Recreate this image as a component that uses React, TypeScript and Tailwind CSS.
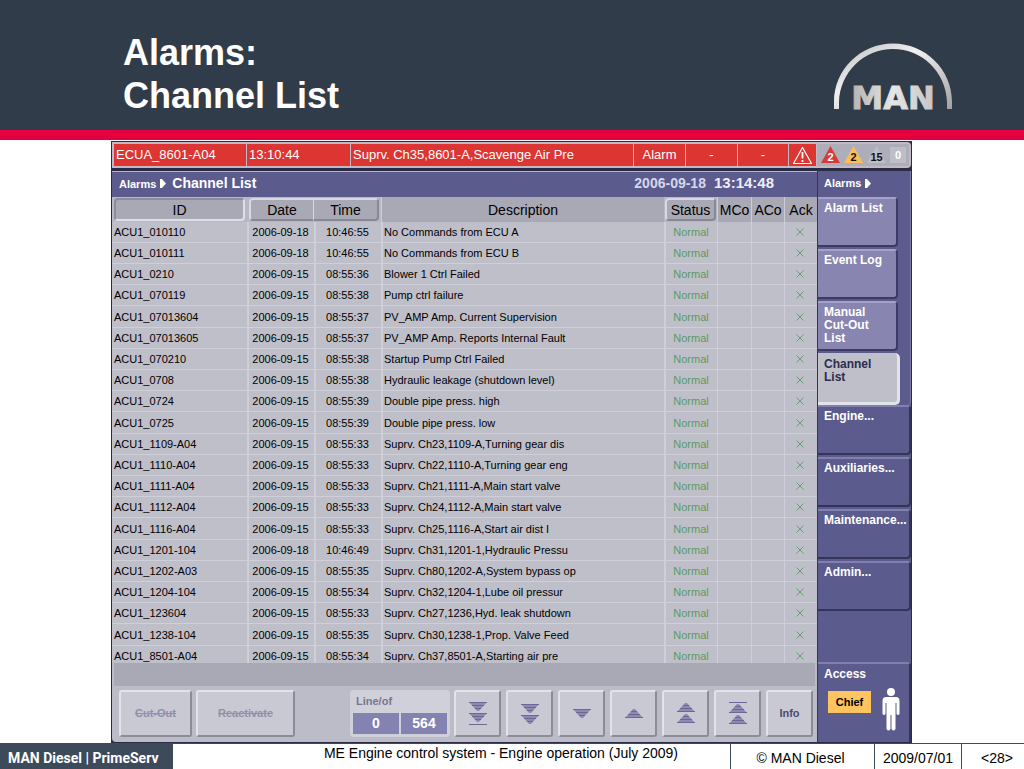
import type { ReactNode } from "react";
import { clsx } from "clsx";

type Channel = { id: string; date: string; time: string; description: string };

const channel = (id: string, day: string, time: string, description: string): Channel => ({
  id,
  date: `2006-09-${day}`,
  time,
  description,
});

const CHANNELS: Channel[] = [
  channel("ACU1_010110", "18", "10:46:55", "No Commands from ECU A"),
  channel("ACU1_010111", "18", "10:46:55", "No Commands from ECU B"),
  channel("ACU1_0210", "15", "08:55:36", "Blower 1 Ctrl Failed"),
  channel("ACU1_070119", "15", "08:55:38", "Pump ctrl failure"),
  channel("ACU1_07013604", "15", "08:55:37", "PV_AMP Amp. Current Supervision"),
  channel("ACU1_07013605", "15", "08:55:37", "PV_AMP Amp. Reports Internal Fault"),
  channel("ACU1_070210", "15", "08:55:38", "Startup Pump Ctrl Failed"),
  channel("ACU1_0708", "15", "08:55:38", "Hydraulic leakage (shutdown level)"),
  channel("ACU1_0724", "15", "08:55:39", "Double pipe press. high"),
  channel("ACU1_0725", "15", "08:55:39", "Double pipe press. low"),
  channel("ACU1_1109-A04", "15", "08:55:33", "Suprv. Ch23,1109-A,Turning gear dis"),
  channel("ACU1_1110-A04", "15", "08:55:33", "Suprv. Ch22,1110-A,Turning gear eng"),
  channel("ACU1_1111-A04", "15", "08:55:33", "Suprv. Ch21,1111-A,Main start valve"),
  channel("ACU1_1112-A04", "15", "08:55:33", "Suprv. Ch24,1112-A,Main start valve"),
  channel("ACU1_1116-A04", "15", "08:55:33", "Suprv. Ch25,1116-A,Start air dist I"),
  channel("ACU1_1201-104", "18", "10:46:49", "Suprv. Ch31,1201-1,Hydraulic Pressu"),
  channel("ACU1_1202-A03", "15", "08:55:35", "Suprv. Ch80,1202-A,System bypass op"),
  channel("ACU1_1204-104", "15", "08:55:34", "Suprv. Ch32,1204-1,Lube oil pressur"),
  channel("ACU1_123604", "15", "08:55:33", "Suprv. Ch27,1236,Hyd. leak shutdown"),
  channel("ACU1_1238-104", "15", "08:55:35", "Suprv. Ch30,1238-1,Prop. Valve Feed"),
  channel("ACU1_8501-A04", "15", "08:55:34", "Suprv. Ch37,8501-A,Starting air pre"),
];

export default function App() {
  return (
    <div className="flex min-h-screen flex-col bg-white font-['Liberation_Sans',Arial,sans-serif] text-black">
      <header className="flex h-[140px] shrink-0 items-start justify-between border-b-[10px] border-[#e4003e] bg-[#313c4a] pl-[123px] pr-[71px]">
        <h1 className="mt-[31px] text-[36px] font-bold leading-[43px] text-white">
          Alarms:
          <br />
          Channel List
        </h1>
        <ManLogo />
      </header>

      <main className="ml-[111px] mr-[112px] mt-px flex flex-1 flex-col border border-[#2a2b45] bg-[#2a2b45]">
        <AlarmBar />
        <div className="mt-[3px] flex flex-1">
          <section className="flex min-w-0 flex-1 flex-col rounded-bl border-t border-[#b4b4c4] bg-[#bcbcc8]">
            <div className="flex h-[25px] items-baseline bg-[#5b5b8d] pl-[7px] pr-[43px] leading-[22px] text-white">
              <span className="text-[11px] font-bold">Alarms</span>
              <Arrow className="ml-1" />
              <h2 className="ml-[6px] flex-1 text-sm font-bold leading-[22px]">Channel List</h2>
              <span className="text-sm font-bold leading-[22px] text-[#d6d6ee]">2006-09-18</span>
              <span className="ml-2 text-[15px] font-bold text-[#ededfa]">13:14:48</span>
            </div>
            <ChannelTable />
            <div className="mx-[2px] h-[23px] bg-[#a9a9b5]" />
            <Toolbar />
          </section>
          <Sidebar />
        </div>
      </main>

      <Footer />
    </div>
  );
}

function ManLogo() {
  return (
    <svg
      width="120"
      height="80"
      viewBox="0 0 120 80"
      className="mt-[41px] overflow-visible"
      role="img"
      aria-label="MAN"
    >
      <defs>
        <linearGradient id="metal" x1="0" y1="0" x2="1" y2="1">
          <stop offset="0" stopColor="#b9b9b9" />
          <stop offset="0.4" stopColor="#f0f0f0" />
          <stop offset="1" stopColor="#a2a2a2" />
        </linearGradient>
        <linearGradient id="letters" x1="0" y1="0" x2="1" y2="0">
          <stop offset="0" stopColor="#b4b4b4" />
          <stop offset="0.5" stopColor="#e6e6e6" />
          <stop offset="1" stopColor="#c6c6c6" />
        </linearGradient>
      </defs>
      <path
        d="M1 68 V61 C1 28 28 2.500 60 2.500 C92 2.500 119 28 119 61 V68 H114 V61 C113 31 89 8 60 8 C31 8 7 31 6 61 V68 Z"
        fill="url(#metal)"
      />
      <text
        x="60"
        y="68"
        textAnchor="middle"
        fill="url(#letters)"
        stroke="url(#letters)"
        strokeWidth="1"
        className="font-['DejaVu_Sans',sans-serif] text-[32px] font-bold"
      >
        MAN
      </text>
    </svg>
  );
}

function Arrow({ className }: { className?: string }) {
  return (
    <svg width="6" height="9" viewBox="0 0 6 9" className={className} aria-hidden="true">
      <path d="M0 0 H2 L6 4.500 L2 9 H0 Z" fill="#fff" />
    </svg>
  );
}

function AlarmBar() {
  const cell = "flex items-center justify-center bg-[#dc3532]";
  return (
    <div className="flex h-[26px] gap-px rounded-r bg-[#c3b9c4] p-[2px] text-[13px] text-white">
      <div className={clsx(cell, "w-[132px] justify-start! pl-[2px]")}>ECUA_8601-A04</div>
      <div className={clsx(cell, "w-[103px] justify-start! pl-[2px]")}>13:10:44</div>
      <div className={clsx(cell, "min-w-0 flex-1 justify-start! whitespace-nowrap pl-[2px]")}>
        Suprv. Ch35,8601-A,Scavenge Air Pre
      </div>
      <div className={clsx(cell, "w-[51px]")}>Alarm</div>
      <div className={clsx(cell, "w-[51px]")}>-</div>
      <div className={clsx(cell, "w-[50px]")}>-</div>
      <div className={clsx(cell, "w-[27px]")}>
        <svg width="21" height="19" viewBox="0 0 21 19" fill="none" stroke="#fff" aria-hidden="true">
          <path d="M10.5 1.5 L19.5 17.5 H1.5 Z" strokeWidth="1.2" strokeLinejoin="round" />
          <path d="M10.5 6 V12.5 M10.5 14 V16" strokeWidth="1.8" />
        </svg>
      </div>
      <div className="flex w-[92px] items-center bg-[#aeaebb] pl-1 text-[11px] font-bold">
        <Badge fill="#d83a38">2</Badge>
        <Badge fill="#fbbd58" dark>2</Badge>
        <Badge fill="#bdbdc6" dark>15</Badge>
        <span className="flex h-4 w-4 items-center justify-center bg-[#bebec8]">0</span>
      </div>
    </div>
  );
}

function Badge({ fill, dark, children }: { fill: string; dark?: boolean; children: ReactNode }) {
  return (
    <svg width="23" height="18" viewBox="0 0 23 18">
      <path d="M9.5 0 L19 17 H0 Z" fill={fill} />
      <text x="9.5" y="15" textAnchor="middle" fill={dark ? "#111" : "#fff"}>
        {children}
      </text>
    </svg>
  );
}

function ChannelTable() {
  const head = "border-l border-[#cdcdd8] bg-[#a9a9b5] p-0 font-normal";
  const raised = "h-[23px] w-full border-[#d8d8e2] bg-[#a9a9b5]";
  const cell = "border-b border-[#cfcfda] p-0";
  return (
    <div className="h-[466px] overflow-hidden bg-[#bfbfca]">
      <table className="w-full table-fixed border-separate border-spacing-0 whitespace-nowrap">
        <colgroup>
          <col className="w-[135px]" />
          <col className="w-[67px]" />
          <col className="w-[67px]" />
          <col />
          <col className="w-[53px]" />
          <col className="w-[34px]" />
          <col className="w-[33px]" />
          <col className="w-[33px]" />
        </colgroup>
        <thead className="text-sm leading-[20px]">
          <tr className="h-[25px]">
            <th className="bg-[#b8b8c4] py-0 pl-[2px] pr-[2px]">
              <button className="h-[23px] w-full rounded border-2 border-[#dedee8] border-l-[#8d8d9a] border-t-[#8d8d9a] bg-[#a9a9b5] font-normal">
                ID
              </button>
            </th>
            <th className="bg-[#b8b8c4] py-0 pl-[2px] pr-0">
              <button className={clsx(raised, "rounded-l border-b-2 border-l-2 border-r border-t-2 border-b-[#888894] font-normal")}>
                Date
              </button>
            </th>
            <th className="bg-[#b8b8c4] py-0 pl-0 pr-[2px]">
              <button className={clsx(raised, "rounded-r border-b-2 border-r-2 border-t-2 border-b-[#888894] border-r-[#888894] font-normal")}>
                Time
              </button>
            </th>
            <th className={head}>Description</th>
            <th className="bg-[#b8b8c4] px-px py-0">
              <button className={clsx(raised, "rounded border-2 border-b-[#888894] border-r-[#888894] font-normal")}>
                Status
              </button>
            </th>
            <th className={head}>MCo</th>
            <th className={head}>ACo</th>
            <th className={head}>Ack</th>
          </tr>
        </thead>
        <tbody className="text-[11px] leading-[16px]">
          {CHANNELS.map((c, i) => (
            <tr key={c.id} className={i % 5 === 4 ? "h-[22px]" : "h-[21px]"}>
              <td className={clsx(cell, "pl-[2px]")}>{c.id}</td>
              <td className={clsx(cell, "border-l-2 pr-[2px] text-center")}>{c.date}</td>
              <td className={clsx(cell, "border-l-2 pr-[2px] text-center")}>{c.time}</td>
              <td className={clsx(cell, "border-l-2 pl-px")}>{c.description}</td>
              <td className={clsx(cell, "border-l-2 pr-px text-center text-[#5b9a62]")}>Normal</td>
              <td className={clsx(cell, "border-l")} />
              <td className={clsx(cell, "border-l")} />
              <td className={clsx(cell, "border-l pr-[2px] text-[#5b9a62]")}>
                <svg width="8" height="8" viewBox="0 0 8 8" className="mx-auto" role="img" aria-label="Acknowledged">
                  <path d="M0.5 0.5 L7.5 7.5 M7.5 0.5 L0.5 7.5" stroke="currentColor" strokeWidth="0.9" />
                </svg>
              </td>
            </tr>
          ))}
        </tbody>
      </table>
    </div>
  );
}

const keyStyle =
  "flex h-[47px] shrink-0 items-center justify-center rounded-[3px] border-2 border-[#e2e2ea] border-b-[#8c8c98] border-r-[#8c8c98] bg-[#c9c9d3] text-[11px] font-bold";

function Toolbar() {
  return (
    <div className="flex flex-1 items-start pl-[7px] pr-1 pt-1">
      <button disabled className={clsx(keyStyle, "w-[73px] text-[#9090aa] line-through")}>
        Cut-Out
      </button>
      <button disabled className={clsx(keyStyle, "ml-1 w-[99px] text-[#9090aa] line-through")}>
        Reactivate
      </button>
      <div className="ml-auto h-[47px] w-[100px] rounded bg-[#d0d0da] px-[3px] pt-[3px]">
        <div className="pl-[3px] text-[11px] font-bold leading-[16px] text-[#77778f]">Line/of</div>
        <div className="mt-1 flex gap-[2px] text-sm font-bold leading-[21px] text-white">
          <span className="flex-1 bg-[#8482b0] text-center">0</span>
          <span className="flex-1 bg-[#8482b0] text-center">564</span>
        </div>
      </div>
      <div className="ml-1 flex gap-[5px]">
        <ScrollKey label="Last line">
          <Down y={2} />
          <Down y={13} />
          <path d="M6 24.500 H24" />
        </ScrollKey>
        <ScrollKey label="Page down">
          <Down y={4} />
          <Down y={15} />
        </ScrollKey>
        <ScrollKey label="Line down">
          <Down y={9} />
        </ScrollKey>
        <ScrollKey label="Line up">
          <Up y={18} />
        </ScrollKey>
        <ScrollKey label="Page up">
          <Up y={12} />
          <Up y={23} />
        </ScrollKey>
        <ScrollKey label="First line">
          <path d="M6 2.500 H24" />
          <Up y={13} />
          <Up y={24} />
        </ScrollKey>
        <button className={clsx(keyStyle, "w-[47px] text-[#4b4b72]")}>Info</button>
      </div>
    </div>
  );
}

function ScrollKey({ label, children }: { label: string; children: ReactNode }) {
  return (
    <button aria-label={label} className={clsx(keyStyle, "w-[47px]")}>
      <svg width="30" height="27" viewBox="0 0 30 27" fill="#8c8ab2" stroke="#6b6994" strokeWidth="1">
        {children}
      </svg>
    </button>
  );
}

// striped arrow heads, y is the wide edge
function Down({ y }: { y: number }) {
  return (
    <>
      <path d={`M6 ${y} H24 L16 ${y + 9} H14 Z`} stroke="none" />
      <path d={`M6 ${y + 0.5} H24 M9 ${y + 3.5} H21 M12 ${y + 6.5} H18`} />
    </>
  );
}

function Up({ y }: { y: number }) {
  return (
    <>
      <path d={`M6 ${y} H24 L16 ${y - 9} H14 Z`} stroke="none" />
      <path d={`M6 ${y - 0.5} H24 M9 ${y - 3.5} H21 M12 ${y - 6.5} H18`} />
    </>
  );
}

function Sidebar() {
  const tab =
    "flex h-[50px] w-[80px] items-start rounded-r-[4px] border-b-2 border-r-2 border-t-2 border-[#3c3b66] border-t-[#a4a2c6] bg-[#8885b0] pl-[6px] pt-[3px] text-left text-white";
  const group =
    "flex h-[50px] w-full items-start rounded-r-[4px] border-b-2 border-r-2 border-t-2 border-[#343459] border-t-[#8280ae] bg-[#5b5b8d] pl-[6px] pt-[3px] text-left text-white";
  return (
    <nav className="flex w-[94px] shrink-0 flex-col border-l border-[#343459] bg-[#5b5b8d] text-[12px] font-bold leading-[13px]">
      <div className="flex flex-col gap-[2px] rounded-br border-r border-[#7c7ba8]">
        <div className="flex h-[24px] items-center pl-[6px] text-[11px] text-white">
          Alarms
          <Arrow className="ml-1" />
        </div>
        <button className={tab}>Alarm List</button>
        <button className={tab}>Event Log</button>
        <button className={tab}>
          <span>
            Manual
            <br />
            Cut-Out
            <br />
            List
          </span>
        </button>
        <button
          aria-current="page"
          className="flex h-[52px] w-[82px] items-start rounded-r-[5px] border-b-[3px] border-r-[3px] border-[#e3e3ec] bg-[#bfbfca] pl-[6px] pt-[5px] text-left text-[#2c2c4c]"
        >
          <span>
            Channel
            <br />
            List
          </span>
        </button>
      </div>
      <div className="flex flex-col gap-[2px]">
        <button className={group}>Engine...</button>
        <button className={group}>Auxiliaries...</button>
        <button className={group}>Maintenance...</button>
        <button className={group}>Admin...</button>
      </div>
      <div className="mt-auto h-[80px] rounded-tr border-r-2 border-t-2 border-[#343459] border-t-[#8280ae] pl-[6px] pt-1 text-white">
        Access
        <div className="mt-[7px] flex items-start justify-between pr-[9px]">
          <button className="ml-1 mt-[3px] h-[22px] w-[43px] bg-[#ffc45f] text-[11px] text-black">Chief</button>
          <svg width="18" height="43" viewBox="0 0 18 43" fill="#fff" aria-hidden="true">
            <circle cx="9" cy="4" r="4" />
            <path d="M4 9 H14 Q17.5 9 17.5 13 V26 Q16 28 14.5 26 V15 H13.5 V41 Q11.5 44 9.5 41 V27 H8.5 V41 Q6.500 44 4.500 41 V15 H3.500 V26 Q2 28 0.500 26 V13 Q0.500 9 4 9 Z" />
          </svg>
        </div>
      </div>
    </nav>
  );
}

function Footer() {
  const box = "border-l border-t border-[#3d4a59] text-center leading-[28px]";
  return (
    <footer className="flex h-[26px] shrink-0 text-sm">
      <div className="flex w-[173px] items-center whitespace-nowrap bg-[#3d4a59] pl-2 pt-1 font-['Roboto','Liberation_Sans',sans-serif] text-[14px] font-bold text-white">
        MAN Diesel | PrimeServ
      </div>
      <div className="min-w-0 flex-1 whitespace-nowrap border-t border-[#3d4a59] pl-[99px] text-center leading-[19px]">
        ME Engine control system - Engine operation (July 2009)
      </div>
      <div className={clsx(box, "w-[144px] pr-1")}>© MAN Diesel</div>
      <div className={clsx(box, "w-[87px]")}>2009/07/01</div>
      <div className={clsx(box, "w-[63px] pl-2")}>&lt;28&gt;</div>
    </footer>
  );
}
